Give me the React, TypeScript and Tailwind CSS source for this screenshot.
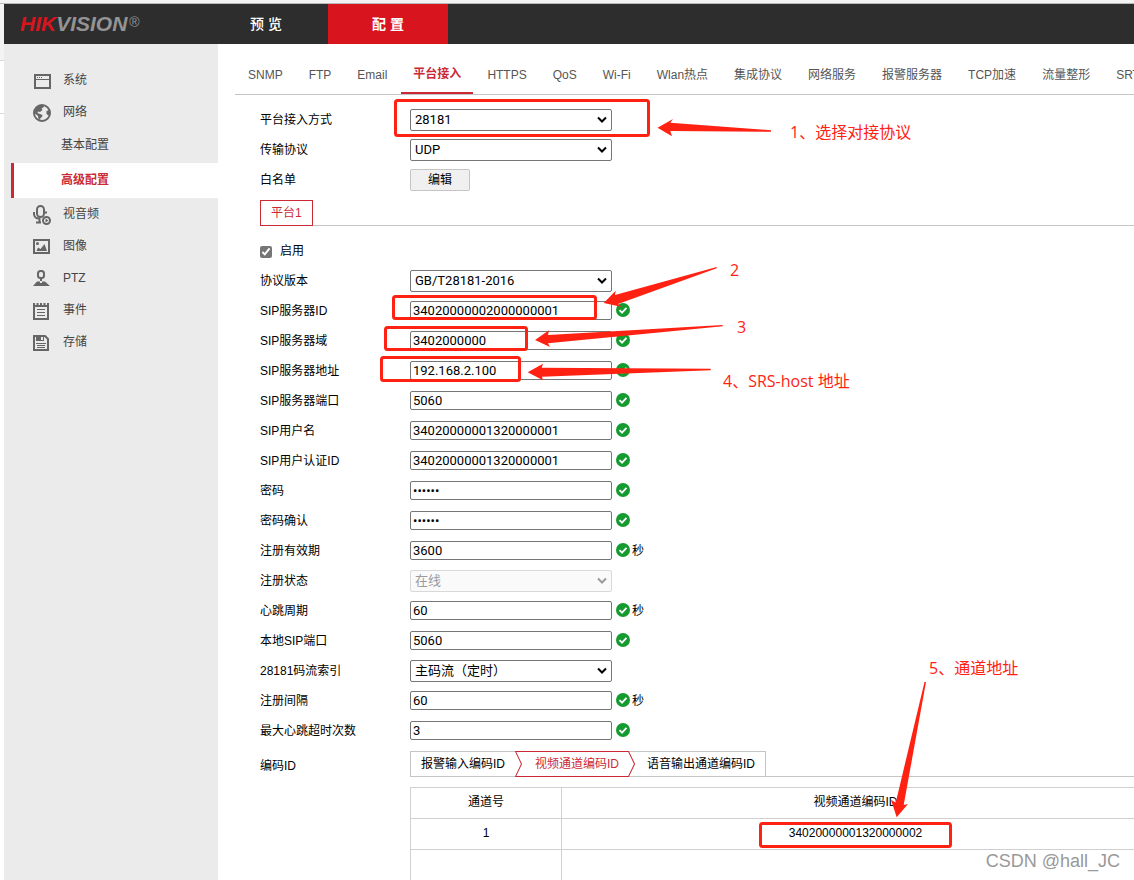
import { useState } from 'react';
import type { ReactNode } from 'react';

type MenuItem = { label: string; icon: ReactNode; children?: string[] };

type Field = {
  id: string;
  label: string;
  kind: 'select' | 'text' | 'password';
  value: string;
  unit?: string;
  disabled?: boolean;
};

const menu: MenuItem[] = [
  {
    label: '系统',
    icon: (
      <>
        <rect x="2" y="4" width="15" height="13" stroke="currentColor" strokeWidth="2" />
        <path d="M2 8.5h15" stroke="currentColor" />
        <path d="M4 6.5h1M6 6.5h1M8 6.5h1" stroke="currentColor" />
      </>
    ),
  },
  {
    label: '网络',
    icon: (
      <>
        <circle cx="9" cy="10" r="8" stroke="currentColor" strokeWidth="2" />
        <path
          d="M1.500 7.500 L5 3 L9.500 2 L11 4 L8.500 5.500 L9.500 7 L7 9 L5 8.500 L4.500 10 L7 11 L9.500 12 L9 14 L7.500 15 L7 17 L5.500 16 L5 13 L2 10.500 Z M13.500 8 L16.500 7 L17 11 L15.500 12.500 L13.500 11 Z"
          fill="currentColor"
        />
      </>
    ),
    children: ['基本配置', '高级配置'],
  },
  {
    label: '视音频',
    icon: (
      <>
        <rect x="4" y="1" width="7" height="11" rx="3.500" stroke="currentColor" strokeWidth="2" />
        <path d="M1 7v2c0 2.500 2 4.500 5 4.500h1M6.500 13v4M3 17.500h5" stroke="currentColor" strokeWidth="2" />
        <rect x="12" y="6.500" width="2" height="2" fill="currentColor" />
        <circle cx="13.500" cy="15.500" r="3.500" stroke="currentColor" strokeWidth="2" />
        <path d="M12.500 13.500v4l3-2z" fill="currentColor" />
      </>
    ),
  },
  {
    label: '图像',
    icon: (
      <>
        <rect x="1" y="3" width="15" height="13" stroke="currentColor" strokeWidth="2" />
        <circle cx="4.500" cy="6.500" r="1.500" fill="currentColor" />
        <path d="M3.500 14 5 10.500l2.500 1.500L11.500 7 14 14z" fill="currentColor" />
      </>
    ),
  },
  {
    label: 'PTZ',
    icon: (
      <>
        <rect x="5" y="2" width="6" height="7" rx="2.500" stroke="currentColor" strokeWidth="2" />
        <path d="M8 10v2" stroke="currentColor" strokeWidth="2" />
        <path d="M4 12.500h3v1.500h2v-1.500h3l5 4.500H0z" fill="currentColor" />
      </>
    ),
  },
  {
    label: '事件',
    icon: (
      <>
        <path d="M1 5h14v13H1z" stroke="currentColor" strokeWidth="2" />
        <path d="M1 2v3M4.500 2v3M8 2v3M11.500 2v3M15 2v3" stroke="currentColor" strokeWidth="2" />
        <path d="M4 8.500h8M4 11.500h8M4 14.500h8" stroke="currentColor" />
      </>
    ),
  },
  {
    label: '存储',
    icon: (
      <>
        <path d="M1 3h11l3 3v11H1z" stroke="currentColor" strokeWidth="2" />
        <path d="M3 3h8v5H3z" fill="currentColor" />
        <path d="M8 4h2v3H8z" fill="#ebebeb" />
        <path d="M3 10.500h10M4 12.500h8M4 14.500h8" stroke="currentColor" />
      </>
    ),
  },
];

const tabs = [
  'SNMP', 'FTP', 'Email', '平台接入', 'HTTPS', 'QoS', 'Wi-Fi', 'Wlan热点',
  '集成协议', '网络服务', '报警服务器', 'TCP加速', '流量整形', 'SRTP',
];

const fields: Field[] = [
  { id: 'version', label: '协议版本', kind: 'select', value: 'GB/T28181-2016' },
  { id: 'server-id', label: 'SIP服务器ID', kind: 'text', value: '34020000002000000001' },
  { id: 'server-domain', label: 'SIP服务器域', kind: 'text', value: '3402000000' },
  { id: 'server-address', label: 'SIP服务器地址', kind: 'text', value: '192.168.2.100' },
  { id: 'server-port', label: 'SIP服务器端口', kind: 'text', value: '5060' },
  { id: 'user', label: 'SIP用户名', kind: 'text', value: '34020000001320000001' },
  { id: 'auth-id', label: 'SIP用户认证ID', kind: 'text', value: '34020000001320000001' },
  { id: 'password', label: '密码', kind: 'password', value: '123456' },
  { id: 'password-confirm', label: '密码确认', kind: 'password', value: '123456' },
  { id: 'expires', label: '注册有效期', kind: 'text', value: '3600', unit: '秒' },
  { id: 'status', label: '注册状态', kind: 'select', value: '在线', disabled: true },
  { id: 'heartbeat', label: '心跳周期', kind: 'text', value: '60', unit: '秒' },
  { id: 'local-port', label: '本地SIP端口', kind: 'text', value: '5060' },
  { id: 'stream', label: '28181码流索引', kind: 'select', value: '主码流（定时）' },
  { id: 'interval', label: '注册间隔', kind: 'text', value: '60', unit: '秒' },
  { id: 'max-timeout', label: '最大心跳超时次数', kind: 'text', value: '3' },
];

const Tick = () => (
  <svg className="mb-0.5 ml-1 size-3.5 shrink-0" viewBox="0 0 14 14" fill="none">
    <circle cx="7" cy="7" r="7" fill="#159a2f" />
    <path d="M3.500 7.200 6 9.600 10.500 4.800" stroke="#fff" strokeWidth="1.800" />
  </svg>
);

const SelectBox = ({ id, value, disabled }: { id: string; value: string; disabled?: boolean }) => (
  <div className={`relative w-[202px] ${disabled ? 'text-[#9a9a9a]' : 'text-black'}`}>
    <select
      id={id}
      disabled={disabled}
      defaultValue={value}
      className={`block h-[22px] w-full appearance-none rounded-xs border px-1 font-[Roboto,'Noto_Sans_CJK_SC',sans-serif] text-[13px] leading-5 ${
        disabled ? 'border-[#d9d9d9] bg-[#fafafa]' : 'border-[#767676] bg-white'
      }`}
    >
      <option value={value}>{value}</option>
    </select>
    <svg className="pointer-events-none absolute top-[7px] right-[5px] h-[7px] w-2.5" viewBox="0 0 10 7" fill="none">
      <path d="M1 1.500 5 5.500 9 1.500" stroke="currentColor" strokeWidth="2" />
    </svg>
  </div>
);

const Row = ({ id, label, children }: { id: string; label: string; children: ReactNode }) => (
  <div className="flex h-[30px] items-center">
    <label htmlFor={id} className="w-[150px] shrink-0">{label}</label>
    {children}
  </div>
);

const FieldRow = ({ field }: { field: Field }) => (
  <Row id={field.id} label={field.label}>
    {field.kind === 'select' ? (
      <SelectBox id={field.id} value={field.value} disabled={field.disabled} />
    ) : (
      <>
        <input
          id={field.id}
          type={field.kind}
          defaultValue={field.value}
          className="mb-px h-[19px] w-[202px] rounded-xs border border-[#767676] bg-white px-0.5 font-[Roboto,sans-serif] text-[13px] leading-4"
        />
        <Tick />
        {field.unit && <span className="ml-0.5">{field.unit}</span>}
      </>
    )}
  </Row>
);

const Header = () => (
  <header className="flex h-10 bg-[#2d2d2d] text-white">
    <div className="flex w-[204px] items-center pl-4 text-[21px] leading-10 font-bold italic">
      <span className="text-[#d8151e]">HIK</span>
      <span className="text-[#949494]">VISION</span>
      <span className="mb-1 ml-0.5 text-sm font-normal not-italic text-[#949494]">®</span>
    </div>
    <nav className="flex text-sm font-bold">
      <a href="#preview" className="flex w-[120px] items-center justify-center pr-1 font-medium">预 览</a>
      <a href="#config" className="flex w-[120px] items-center justify-center bg-[#d8151e]">配 置</a>
    </nav>
  </header>
);

const Sidebar = () => (
  <aside className="w-[214px] shrink-0 bg-[#ebebeb] pt-5 text-[#444]">
    <ul>
      {menu.map((item) => (
        <li key={item.label}>
          <a href="#menu" className="flex h-8 items-center gap-3 pl-[29px]">
            <svg className="mt-0.5 h-5 w-[18px] text-[#666]" viewBox="0 0 18 20" fill="none">
              {item.icon}
            </svg>
            {item.label}
          </a>
          {item.children?.map((child) => (
            <a
              key={child}
              href="#menu"
              className={`ml-[7px] flex h-[35px] items-center border-l-3 pb-0.5 pl-[47px] ${
                child === '高级配置' ? 'border-[#cb2a34] bg-white font-bold text-[#cb2a34]' : 'border-transparent'
              }`}
            >
              {child}
            </a>
          ))}
        </li>
      ))}
    </ul>
  </aside>
);

const CodeTabs = () => (
  <div className="flex h-[26px] grow border-b border-[#c4c4c4]">
    <div className="flex border-t border-r border-l border-[#c4c4c4]">
      <button type="button" className="pr-2.5 pl-2.5">报警输入编码ID</button>
      <button type="button" className="relative pr-4 pl-5 text-[#cb2a34]">
        <svg
          className="absolute -top-px left-0 h-[26px] w-full"
          viewBox="0 0 120 26"
          preserveAspectRatio="none"
          fill="none"
        >
          <path d="M.5.5H113.500L119.500 13 113.500 25.500H.5L6.500 13z" stroke="#cb2a34" />
        </svg>
        视频通道编码ID
      </button>
      <button type="button" className="pr-2.5 pl-3">语音输出通道编码ID</button>
    </div>
  </div>
);

const ChannelTable = () => (
  <table className="w-full table-fixed border-collapse text-center">
    <thead>
      <tr className="h-[31px]">
        <th className="w-[151px] border border-[#d0d0d0] pb-0.5 font-normal">通道号</th>
        <th className="border border-[#d0d0d0] pb-0.5 font-normal">视频通道编码ID</th>
      </tr>
    </thead>
    <tbody>
      <tr className="h-[31px]">
        <td className="border border-[#d0d0d0] pb-0.5">1</td>
        <td className="border border-[#d0d0d0] pb-0.5">34020000001320000002</td>
      </tr>
      <tr className="h-[31px]">
        <td className="border-x border-[#d0d0d0]"></td>
        <td className="border-x border-[#d0d0d0]"></td>
      </tr>
    </tbody>
  </table>
);

// Red boxes, arrows and notes drawn over the form
const Annotations = () => (
  <div className="pointer-events-none absolute inset-0 font-['Open_Sans','Noto_Sans_CJK_SC',sans-serif] text-base leading-6 text-[#ff2213]">
    <svg className="absolute top-0 left-0 h-[880px] w-[1134px]" viewBox="0 0 1134 880">
      <g fill="none" stroke="#ff2213" strokeWidth="3">
        <rect x="395.500" y="100.500" width="253" height="35" rx="2" />
        <rect x="393.500" y="296.500" width="202" height="22" rx="2" />
        <rect x="385.500" y="327.500" width="141" height="22" rx="2" />
        <rect x="381.500" y="357.500" width="138" height="23" rx="2" />
        <rect x="760.500" y="823.500" width="190" height="23" rx="2" />
      </g>
      <g fill="#ff2213">
        <path d="M657.500 127.700 673 119 670.300 122.700 771 130.300V131.700L670.300 131 672 136.300z" />
        <path d="M603.700 303 615.700 290.700 615 295 716.700 267V268.300L618 304 622 307z" />
        <path d="M535 340 549 330.300 548 335 722.700 325V326.300L548 343.300 550 347z" />
        <path d="M527.700 372.300 543 363.700 541.700 367.700 710.700 368.700V370.300L542 376.700 543 380.300z" />
        <path d="M896.700 817.300 891 799.700 895.700 802.700 924.500 682H926L903.700 805 908 804z" />
      </g>
    </svg>
    <span className="absolute top-[120px] left-[790px]">1、选择对接协议</span>
    <span className="absolute top-[258px] left-[730px]">2</span>
    <span className="absolute top-[315px] left-[737px]">3</span>
    <span className="absolute top-[369px] left-[723px]">4、SRS-host 地址</span>
    <span className="absolute top-[656px] left-[929px]">5、通道地址</span>
  </div>
);

const App = () => {
  const [enabled, setEnabled] = useState(true);

  return (
    <div className="relative min-h-screen overflow-hidden bg-white font-['Liberation_Sans','Noto_Sans_CJK_SC',sans-serif] text-xs text-black">
      <div className="h-1 border-b border-[#b8b8b8] bg-[#f3f3f3]"></div>

      <div className="flex">
        {/* Sliver of the window behind the page */}
        <div className="w-1 shrink-0">
          <div className="h-[57px] border-b border-[#dcdcdc] bg-[#f3f3f3]"></div>
          <div className="h-[53px] border-b border-[#dcdcdc]"></div>
        </div>

        <div className="min-w-0 grow">
          <Header />
          <div className="flex">
            <Sidebar />

            <main className="min-w-0 grow pl-[17px]">
              <nav className="flex gap-0.5 border-b border-[#c4c4c4] pt-2.5 pl-px text-[#555]">
                {tabs.map((tab) => (
                  <a
                    key={tab}
                    href="#tab"
                    className={`flex h-10 shrink-0 items-center px-3 pt-0.5 ${
                      tab === '平台接入' ? 'border-b-2 border-[#cb2a34] font-bold text-[#cb2a34]' : ''
                    }`}
                  >
                    {tab}
                  </a>
                ))}
              </nav>

              <form className="pt-2.5 pl-[25px]">
                <Row id="access" label="平台接入方式">
                  <SelectBox id="access" value="28181" />
                </Row>
                <Row id="transport" label="传输协议">
                  <SelectBox id="transport" value="UDP" />
                </Row>
                <Row id="whitelist" label="白名单">
                  <button
                    id="whitelist"
                    type="button"
                    className="mb-px h-[22px] w-[60px] rounded-xs border border-[#c4c4c4] bg-[#f0f0f0]"
                  >
                    编辑
                  </button>
                </Row>

                <div className="mt-[5px] mb-2.5 flex h-[26px] border-b border-[#c4c4c4]">
                  <button type="button" className="h-[26px] border border-[#cb2a34] px-2.5 text-[#cb2a34]">
                    平台1
                  </button>
                </div>

                <div className="flex h-[30px] items-center gap-2">
                  <input
                    id="enabled"
                    type="checkbox"
                    checked={enabled}
                    onChange={(e) => setEnabled(e.target.checked)}
                    className="mt-0.5 size-3 accent-[#767676]"
                  />
                  <label htmlFor="enabled">启用</label>
                </div>

                {fields.map((field) => (
                  <FieldRow key={field.id} field={field} />
                ))}

                <div className="flex pt-[5px]">
                  <span className="w-[150px] shrink-0 leading-[30px]">编码ID</span>
                  <CodeTabs />
                </div>
                <div className="mt-1.5 -mr-4 pl-[150px]">
                  <ChannelTable />
                </div>
              </form>
            </main>
          </div>
        </div>
      </div>

      <Annotations />
      <div className="absolute right-3.5 bottom-1.5 text-lg text-[#999]">CSDN @hall_JC</div>
    </div>
  );
};

export default App;
